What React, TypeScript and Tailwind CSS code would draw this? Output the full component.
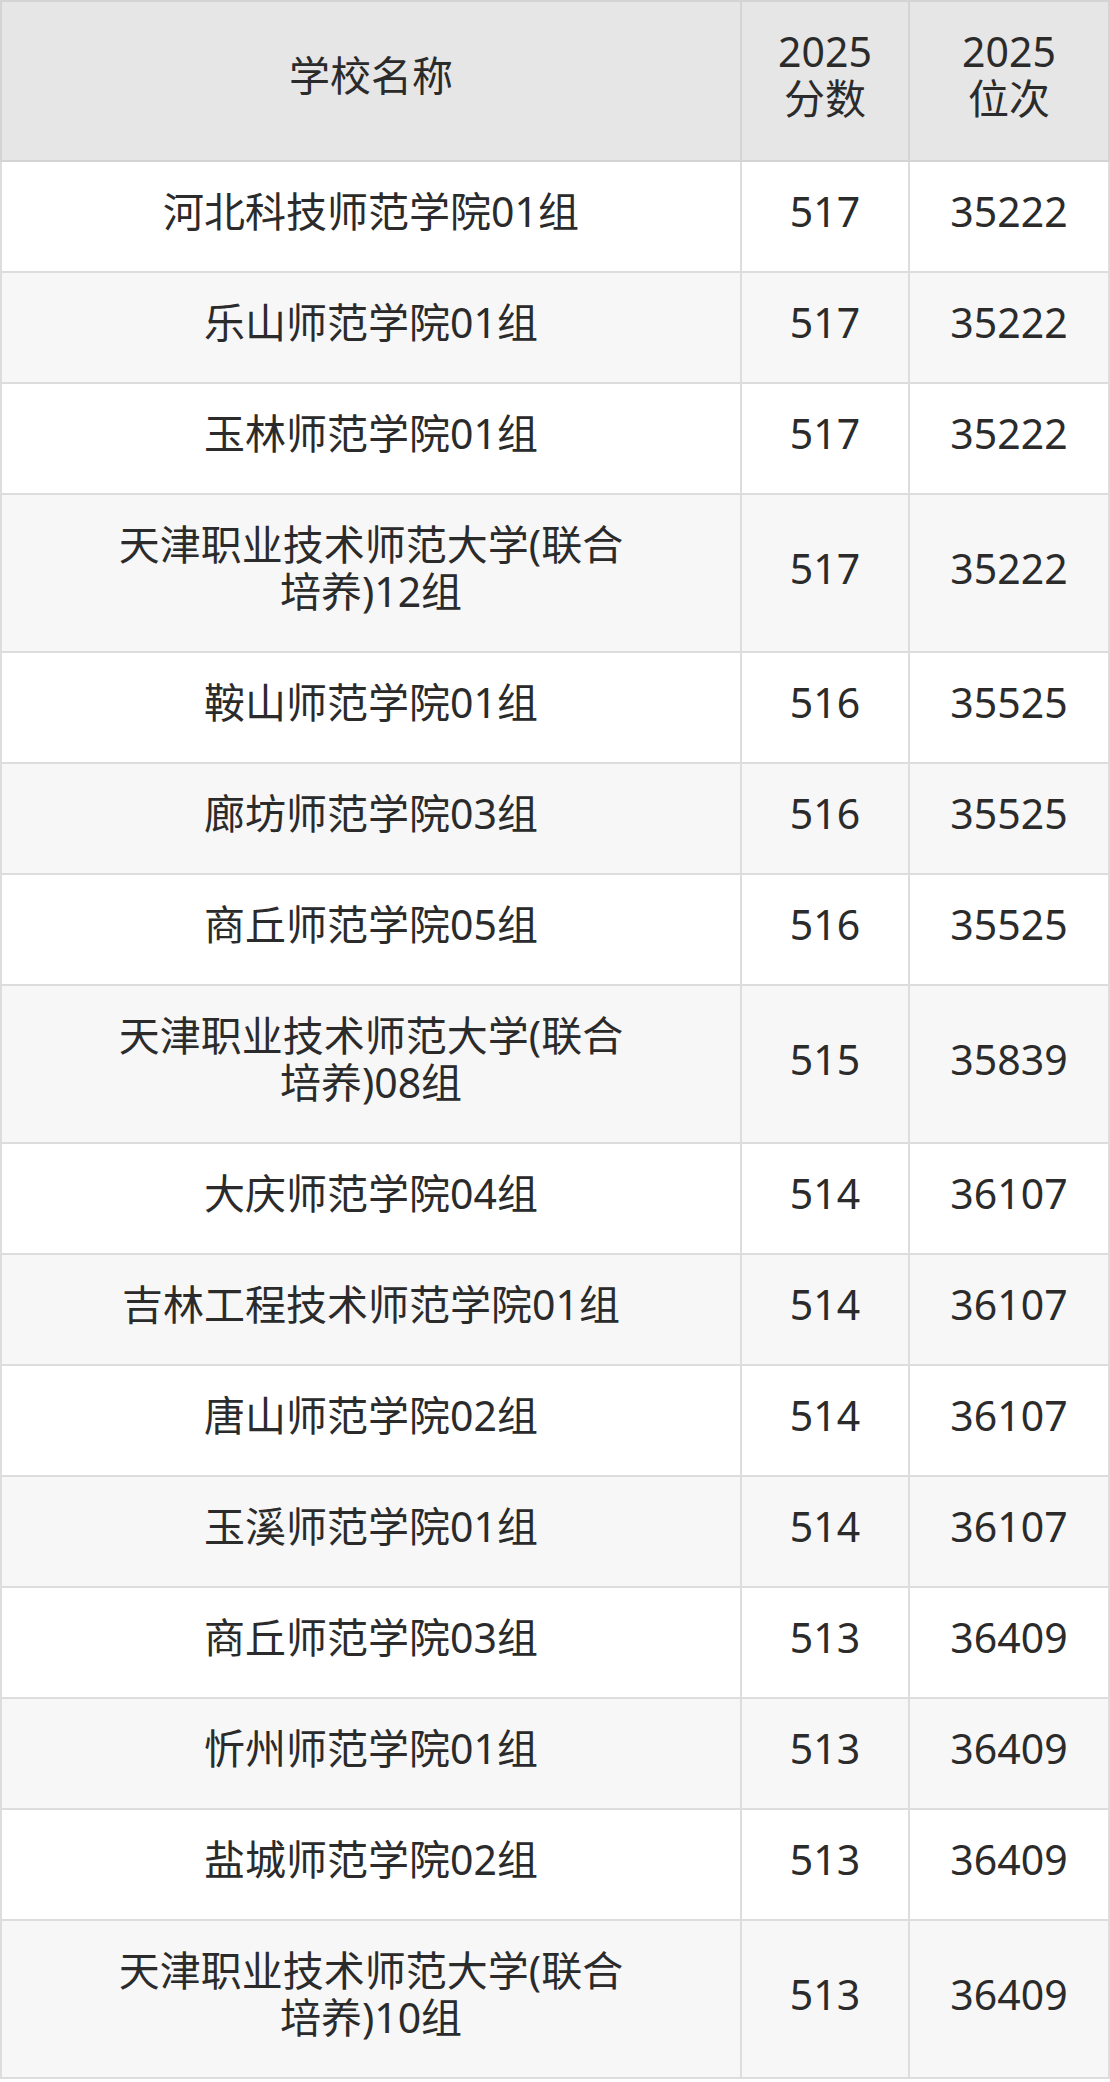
const rows: [string, string, string][] = [
  ["河北科技师范学院01组", "517", "35222"],
  ["乐山师范学院01组", "517", "35222"],
  ["玉林师范学院01组", "517", "35222"],
  ["天津职业技术师范大学(联合培养)12组", "517", "35222"],
  ["鞍山师范学院01组", "516", "35525"],
  ["廊坊师范学院03组", "516", "35525"],
  ["商丘师范学院05组", "516", "35525"],
  ["天津职业技术师范大学(联合培养)08组", "515", "35839"],
  ["大庆师范学院04组", "514", "36107"],
  ["吉林工程技术师范学院01组", "514", "36107"],
  ["唐山师范学院02组", "514", "36107"],
  ["玉溪师范学院01组", "514", "36107"],
  ["商丘师范学院03组", "513", "36409"],
  ["忻州师范学院01组", "513", "36409"],
  ["盐城师范学院02组", "513", "36409"],
  ["天津职业技术师范大学(联合培养)10组", "513", "36409"],
];

export default function App() {
  return (
    <div
      className="w-[1110px] bg-white text-[#2b2b2b] text-[41px] leading-[47px]"
      style={{ fontFamily: '"Noto Sans", "Noto Sans CJK SC", sans-serif' }}
    >
      <table className="w-full table-fixed border-collapse border-2 border-[#d4d4d4]">
        <colgroup>
          <col className="w-[740px]" />
          <col className="w-[168px]" />
          <col />
        </colgroup>
        <thead>
          <tr className="bg-[#e6e6e6]">
            <th className="font-normal border-2 border-[#d4d4d4] text-center pt-[26px] pb-[38px]">学校名称</th>
            <th className="font-normal border-2 border-[#d4d4d4] text-center pt-[26px] pb-[38px]">
              2025
              <br />
              分数
            </th>
            <th className="font-normal border-2 border-[#d4d4d4] text-center pt-[26px] pb-[38px]">
              2025
              <br />
              位次
            </th>
          </tr>
        </thead>
        <tbody>
          {rows.map(([name, score, rank], i) => (
            <tr key={i} className={i % 2 === 1 ? "bg-[#f7f7f7]" : "bg-white"}>
              <td className="border-2 border-[#dddddd] pt-[26px] pb-[36px] text-center">
                <div className="mx-auto max-w-[540px]">{name}</div>
              </td>
              <td className="border-2 border-[#dddddd] pt-[26px] pb-[36px] text-center">{score}</td>
              <td className="border-2 border-[#dddddd] pt-[26px] pb-[36px] text-center">{rank}</td>
            </tr>
          ))}
        </tbody>
      </table>
    </div>
  );
}
